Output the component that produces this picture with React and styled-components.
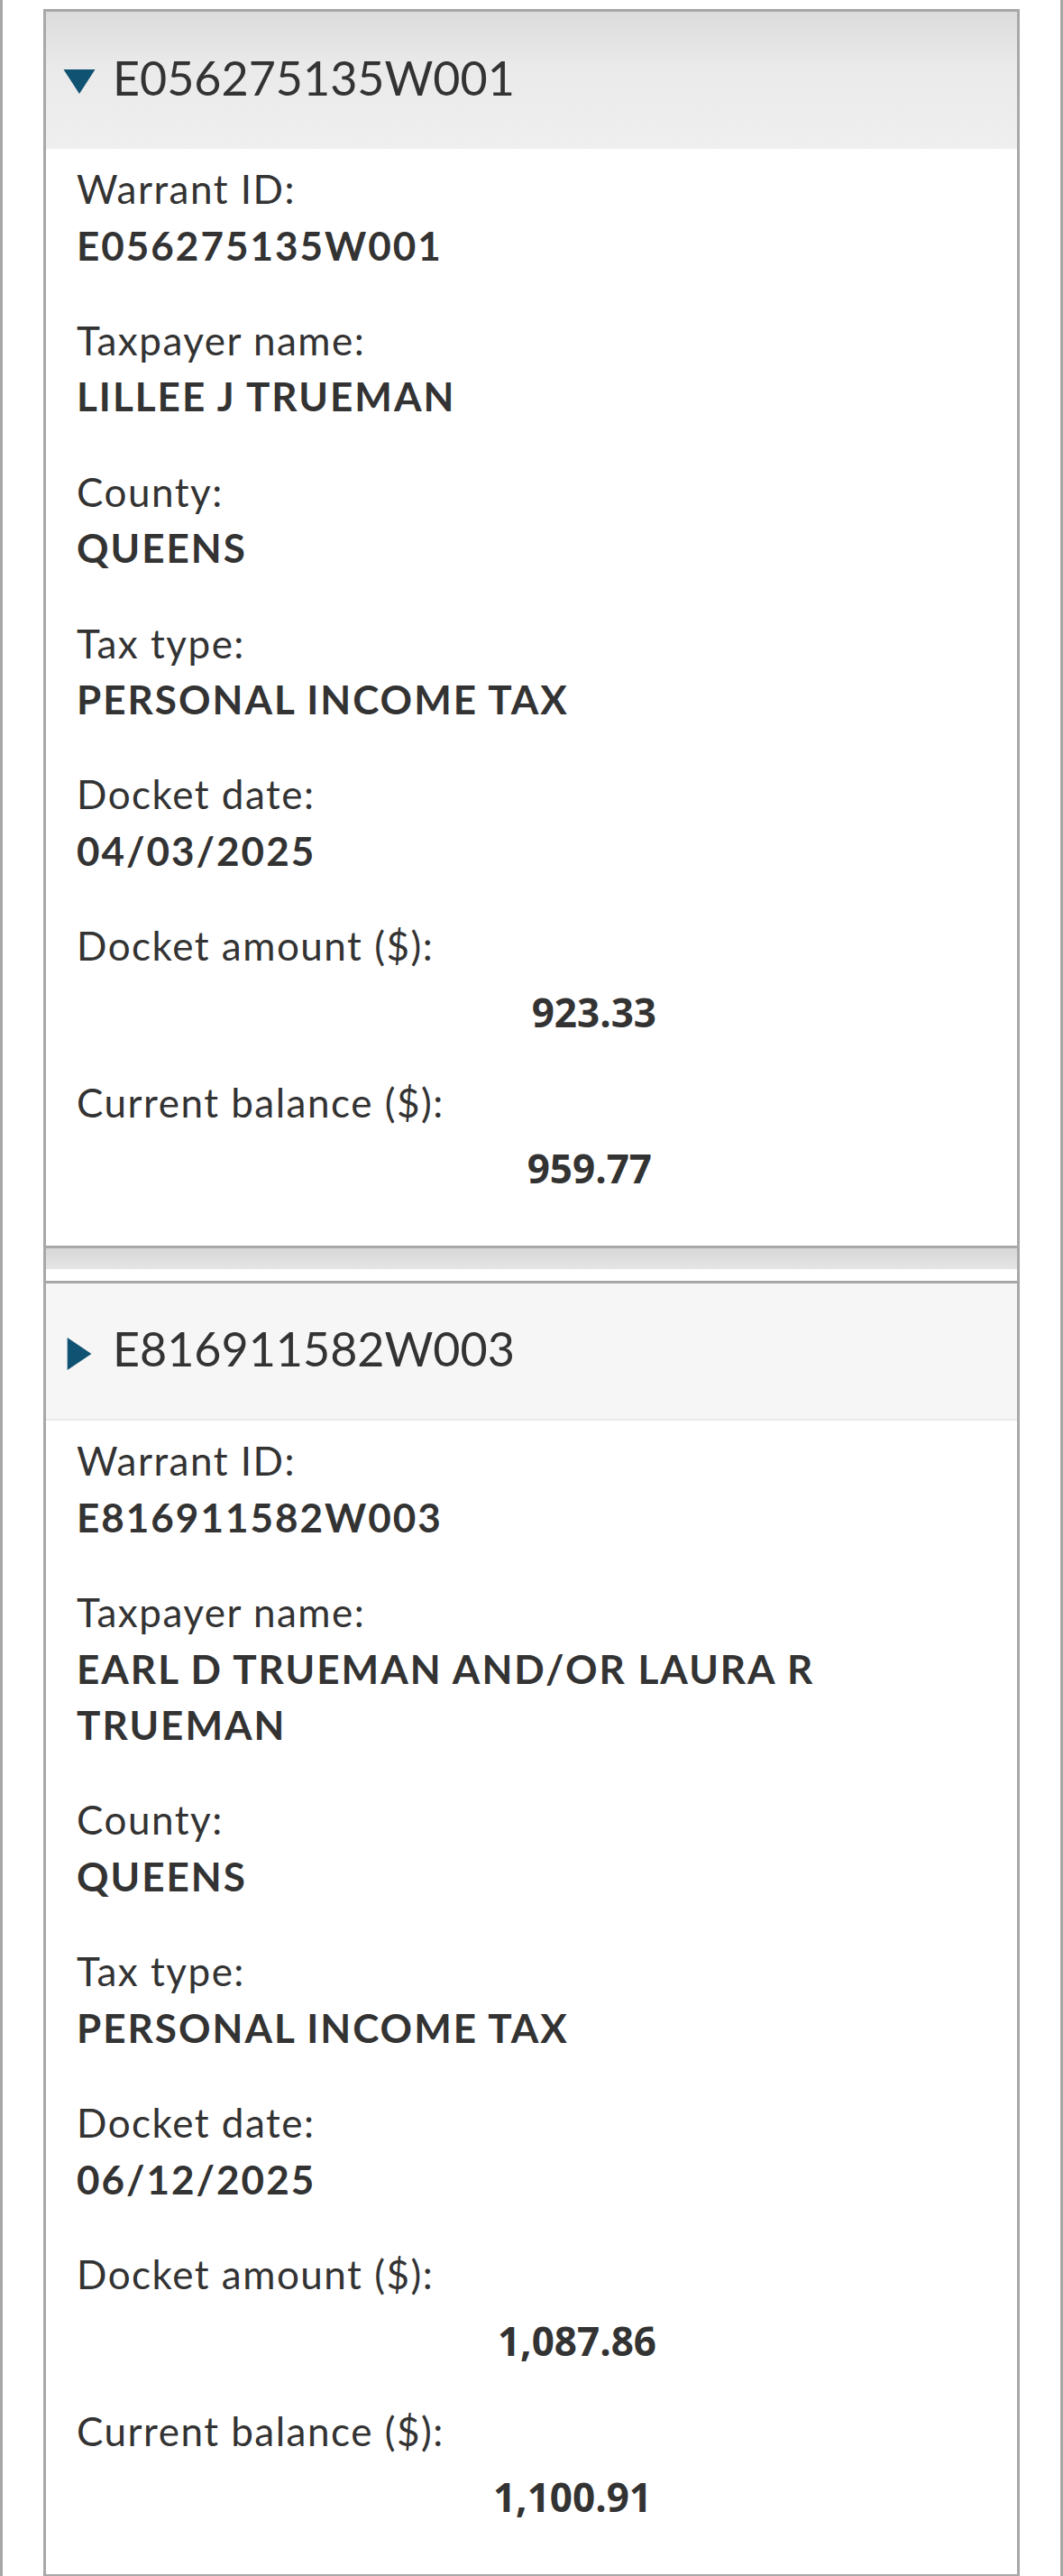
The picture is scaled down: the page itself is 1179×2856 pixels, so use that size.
import React from "react";
import styled, { createGlobalStyle } from "styled-components";

const GlobalStyle = createGlobalStyle`
  html, body { margin: 0; padding: 0; background: #fff; }
  body { font-family: Lato, "Liberation Sans", sans-serif; color: #333; }
  * { box-sizing: border-box; }
`;

const Page = styled.div`
  min-height: 2856px;
  border-left: 3px solid #a7a8a5;
  border-right: 3px solid #a7a8a5;
  padding: 10px 45px 0;
`;

const Panel = styled.div`
  border-left: 3px solid #a8a8a8;
  border-right: 3px solid #a8a8a8;
  background: #fff;
`;

const Item = styled.section`
  display: flex;
  flex-direction: column;
`;

const Header = styled.div`
  height: 155px;
  border-top: 3px solid #a8a8a8;
  border-bottom: ${(p) => (p.$expanded ? "0" : "2px solid #ebebeb")};
  background: ${(p) =>
    p.$expanded ? "linear-gradient(#dcdcdc, #eaeaea 40%, #efefef)" : "#f6f6f6"};
  display: flex;
  align-items: center;
  padding-left: 19px;
`;

const CaretBox = styled.svg`
  width: 36px;
  height: 44px;
  flex: none;
  fill: #0f5272;
`;

const Title = styled.h2`
  margin: 0 0 0 19px;
  padding-bottom: 7px;
  font-family: Lato, "Liberation Sans", sans-serif;
  font-weight: 400;
  font-size: 52px;
  line-height: 60px;
  color: #333;
`;

const Body = styled.div`
  background: #fff;
  padding: 13px 34px 17px;
`;

const Field = styled.div`
  margin-bottom: ${(p) => (p.$amount ? "26.4px" : "42.86px")};
`;

const Label = styled.div`
  font-size: 44px;
  line-height: 62.5px;
  font-weight: 400;
  letter-spacing: 1.5px;
  color: #333;
`;

const Value = styled.div`
  font-size: 44px;
  line-height: 62.5px;
  font-weight: 700;
  letter-spacing: 2px;
  color: #333;
`;

const AmountValue = styled.div`
  width: ${(p) => p.$right}px;
  text-align: right;
  font-family: "Open Sans", "Liberation Sans", sans-serif;
  font-weight: 700;
  font-size: 44px;
  line-height: 84.6px;
  color: #333;
`;

const Footer = styled.div`
  height: 26px;
  border-top: 3px solid #a8a8a8;
  background: linear-gradient(#d8d8d8, #e5e5e5);
  margin-bottom: 13px;
`;

function Caret({ expanded }) {
  return (
    <CaretBox viewBox="0 0 36 44" aria-hidden="true">
      {expanded ? (
        <polygon points="0.5,10 35.5,10 18,37" />
      ) : (
        <polygon points="4.7,7 31.4,25 4.7,43" />
      )}
    </CaretBox>
  );
}

const warrants = [
  {
    id: "E056275135W001",
    expanded: true,
    name: "LILLEE J TRUEMAN",
    county: "QUEENS",
    taxType: "PERSONAL INCOME TAX",
    date: "04/03/2025",
    amount: "923.33",
    balance: "959.77",
  },
  {
    id: "E816911582W003",
    expanded: false,
    name: "EARL D TRUEMAN AND/OR LAURA R TRUEMAN",
    county: "QUEENS",
    taxType: "PERSONAL INCOME TAX",
    date: "06/12/2025",
    amount: "1,087.86",
    balance: "1,100.91",
  },
];

function WarrantItem({ w }) {
  const fields = [
    ["Warrant ID:", w.id],
    ["Taxpayer name:", w.name],
    ["County:", w.county],
    ["Tax type:", w.taxType],
    ["Docket date:", w.date],
  ];
  return (
    <Item>
      <Header $expanded={w.expanded}>
        <Caret expanded={w.expanded} />
        <Title>{w.id}</Title>
      </Header>
      <Body>
        {fields.map(([label, value]) => (
          <Field key={label}>
            <Label>{label}</Label>
            <Value>{value}</Value>
          </Field>
        ))}
        <Field $amount>
          <Label>Docket amount ($):</Label>
          <AmountValue $right={643}>{w.amount}</AmountValue>
        </Field>
        <Field $amount>
          <Label>Current balance ($):</Label>
          <AmountValue $right={638}>{w.balance}</AmountValue>
        </Field>
      </Body>
      <Footer />
    </Item>
  );
}

export default function App() {
  return (
    <>
      <GlobalStyle />
      <Page>
        <Panel>
          {warrants.map((w) => (
            <WarrantItem key={w.id} w={w} />
          ))}
        </Panel>
      </Page>
    </>
  );
}
